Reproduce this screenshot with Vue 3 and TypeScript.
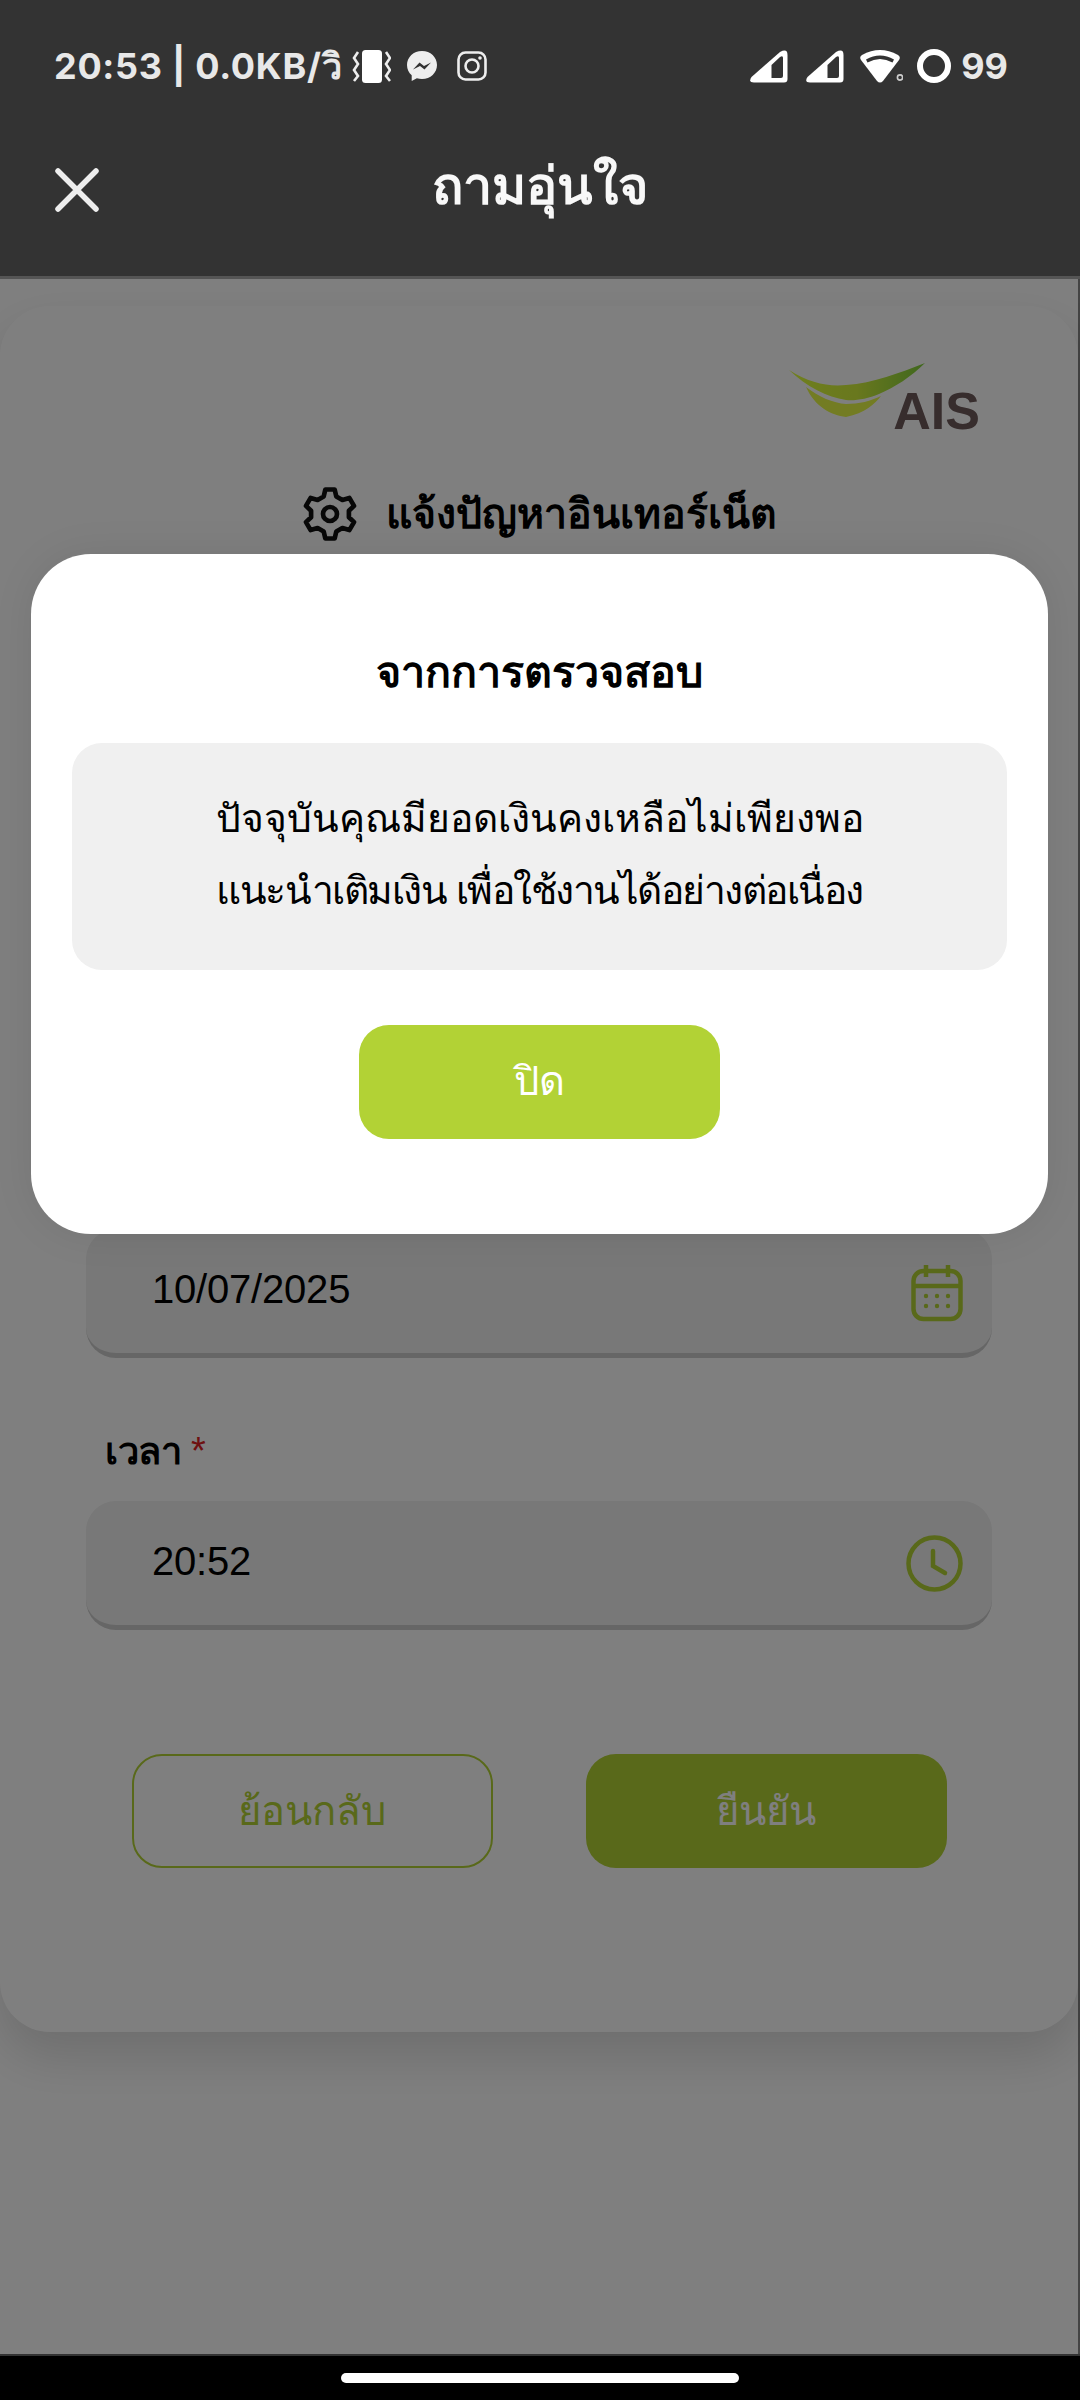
<script setup lang="ts">
const title = 'ถามอุ่นใจ'
const date = '10/07/2025'
const time = '20:52'
</script>

<template>
  <div class="screen">
    <header class="top">
      <div class="status">
        <span class="status-text clock-text">20:53 | 0.0KB/วิ</span>
        <svg class="ic-vib" viewBox="0 0 39 33">
          <rect x="10" y="0" width="20" height="33" rx="3.500" fill="#fff" />
          <path d="M6 2 L2 8 L6 14 L2 20 L6 26 L2 31" fill="none" stroke="#eee" stroke-width="2.600" />
          <path d="M34 2 L38 8 L34 14 L38 20 L34 26 L38 31" fill="none" stroke="#eee" stroke-width="2.600" />
        </svg>
        <svg class="ic-msg" viewBox="0 0 32 32">
          <path d="M16 1C7.500 1 1 7.200 1 15c0 4.300 1.800 7.800 4.700 10.300V31l5.200-2.700c1.600.5 3.300.7 5.100.7 8.500 0 15-6.200 15-14S24.500 1 16 1z" fill="#eee" />
          <path d="M7 19.500 L13.500 12.500 L18 16 L25 12.500 L18.500 19.500 L14 16 Z" fill="#333" />
        </svg>
        <svg class="ic-ig" viewBox="0 0 30 30">
          <rect x="1.500" y="1.500" width="27" height="27" rx="7" fill="none" stroke="#eee" stroke-width="2.600" />
          <circle cx="15" cy="15" r="6.500" fill="none" stroke="#eee" stroke-width="2.600" />
          <circle cx="23" cy="7" r="1.800" fill="#eee" />
        </svg>
        <span class="grow"></span>
        <svg class="ic-sig" viewBox="0 0 38 33">
          <path d="M1.500 27 L30 2 Q37.500 -2 37.500 5 V29 Q37.500 32.500 34 32.500 H4 Q-2 32.500 1.500 27Z" fill="#fff" />
          <path d="M21.500 15 L30 7 Q33 5 33 8 V26 Q33 28 31 28 H21.500Z" fill="#333" />
        </svg>
        <svg class="ic-sig sig2" viewBox="0 0 38 33">
          <path d="M1.500 27 L30 2 Q37.500 -2 37.500 5 V29 Q37.500 32.500 34 32.500 H4 Q-2 32.500 1.500 27Z" fill="#fff" />
          <path d="M21.500 15 L30 7 Q33 5 33 8 V26 Q33 28 31 28 H21.500Z" fill="#333" />
        </svg>
        <svg class="ic-wifi" viewBox="0 0 43 34">
          <path d="M1 11 Q-1 8 2 6 Q20 -4 38 6 Q41 8 39 11 L23 32 Q20 35 17 32Z" fill="#fff" />
          <path d="M6 10.500 Q20 2.500 34 10.500 L32.500 13.500 Q20 6.500 7.500 13.500Z" fill="#333" />
          <circle cx="40" cy="28.500" r="2.600" fill="none" stroke="#ccc" stroke-width="1.600" />
        </svg>
        <svg class="ic-batt" viewBox="0 0 34 34">
          <circle cx="17" cy="17" r="14" fill="none" stroke="#fff" stroke-width="6" />
        </svg>
        <span class="status-text batt">99</span>
      </div>
      <div class="bar">
        <svg class="close" viewBox="0 0 44 44">
          <path d="M3 3 L41 41 M41 3 L3 41" stroke="#eee" stroke-width="5.500" stroke-linecap="round" />
        </svg>
        <h1 class="bar-title">{{ title }}</h1>
      </div>
    </header>

    <main class="main">
      <section class="card">
        <div class="logo">
          <svg class="swoosh" viewBox="0 0 136 54">
            <defs>
              <linearGradient id="sw" x1="0" y1="0" x2="1" y2="0">
                <stop offset="0" stop-color="#e0ff3c" />
                <stop offset="0.5" stop-color="#d2f03c" />
                <stop offset="1" stop-color="#80d03c" />
              </linearGradient>
            </defs>
            <path d="M0 7 C20 20 40 24 57 22 C85 20 110 10 136 0 C122 14 106 24 90 31 C78 36 66 38 57 37 C38 34 18 24 0 7Z" fill="url(#sw)" />
            <path d="M17 24 C30 34 44 40 57 41 C70 41 82 38 92 33 C86 41 76 50 57 54 C42 52 26 44 17 24Z" fill="#e6f846" />
          </svg>
          <span class="ais">AIS</span>
        </div>

        <div class="form-title">
          <svg class="gear" viewBox="0 0 24 24" fill="none" stroke="#111" stroke-width="2" stroke-linejoin="round">
            <path d="M10 1.500h4l.7 3 2.600 1.500 3-.9 2 3.400-2.200 2.100v2.800l2.200 2.100-2 3.400-3-.9-2.600 1.500-.7 3h-4l-.7-3-2.600-1.500-3 .9-2-3.400 2.200-2.100v-2.800L1.700 8.500l2-3.400 3 .9L9.300 4.500z" />
            <circle cx="12" cy="12" r="3" />
          </svg>
          <span>แจ้งปัญหาอินเทอร์เน็ต</span>
        </div>

        <div class="field date-field">
          <span class="value">{{ date }}</span>
          <svg class="fi cal" viewBox="0 0 52 57" fill="none" stroke="#b2d235" stroke-width="4.500">
            <rect x="2.500" y="6" width="47" height="48" rx="10" />
            <path d="M2.500 21 H49.500 M15 0 V12 M37 0 V12" />
            <g fill="#b2d235" stroke="none">
              <circle cx="15" cy="31" r="2.200" /><circle cx="26" cy="31" r="2.200" /><circle cx="37" cy="31" r="2.200" />
              <circle cx="15" cy="41" r="2.200" /><circle cx="26" cy="41" r="2.200" /><circle cx="37" cy="41" r="2.200" />
            </g>
          </svg>
        </div>

        <label class="label">เวลา <em>*</em></label>
        <div class="field">
          <span class="value">{{ time }}</span>
          <svg class="fi clock" viewBox="0 0 57 57" fill="none" stroke="#b2d235" stroke-width="4.500" stroke-linecap="round">
            <circle cx="28.500" cy="28.500" r="26" />
            <path d="M27 16 V31 L39 38" />
          </svg>
        </div>

        <div class="actions">
          <button class="btn ghost">ย้อนกลับ</button>
          <button class="btn solid">ยืนยัน</button>
        </div>
      </section>

      <div class="scrim">
        <div class="modal">
          <h2 class="modal-title">จากการตรวจสอบ</h2>
          <div class="modal-box">
            <p class="line-a">ปัจจุบันคุณมียอดเงินคงเหลือไม่เพียงพอ</p>
            <p class="line-b">แนะนำเติมเงิน เพื่อใช้งานได้อย่างต่อเนื่อง</p>
          </div>
          <button class="btn close-btn">ปิด</button>
        </div>
      </div>
    </main>

    <footer class="nav"><span class="pill"></span></footer>
  </div>
</template>

<style>
html, body { margin: 0; background: #000; }
</style>

<style scoped>
.screen {
  width: 1080px;
  height: 2400px;
  display: flex;
  flex-direction: column;
  overflow: hidden;
  font-family: "Liberation Sans", "Noto Sans", sans-serif;
}

.top {
  height: 276px;
  flex: none;
  background: #333;
  border-bottom: 3px solid #555;
}
.status {
  display: flex;
  align-items: center;
  height: 34px;
  padding: 49px 72px 0 54px;
}
.status-text {
  font: 700 36px Inter, "Noto Sans", sans-serif;
  color: #e8e8e8;
  white-space: nowrap;
}
.clock-text { letter-spacing: 0.7px; }
.grow { flex: 1; }
.ic-vib { width: 39px; height: 33px; margin-left: 10px; }
.ic-msg { width: 32px; height: 32px; margin-left: 15px; }
.ic-ig { width: 30px; height: 30px; margin-left: 19px; }
.ic-sig { width: 38px; height: 33px; }
.sig2 { margin-left: 18px; }
.ic-wifi { width: 43px; height: 34px; margin-left: 16px; }
.ic-batt { width: 34px; height: 34px; margin-left: 14px; }
.batt { margin-left: 10px; }

.bar {
  position: relative;
  display: flex;
  align-items: center;
  justify-content: center;
  height: 90px;
  margin-top: 57px;
}
.close { position: absolute; left: 55px; top: 28px; width: 44px; height: 44px; }
.bar-title {
  margin: 0;
  font-size: 52px;
  font-weight: 700;
  color: #f8f8f8;
}

.main {
  position: relative;
  flex: 1;
  background: #fff;
  padding-top: 27px;
  border-right: 2px solid #444;
}
.card {
  height: 1726px;
  box-sizing: border-box;
  background: #fff;
  border-radius: 50px;
  box-shadow: 0 24px 50px rgba(0, 0, 0, 0.14);
  padding: 57px 0 0;
}
.logo {
  display: flex;
  justify-content: flex-end;
  align-items: flex-end;
  padding: 0 98px 0 0;
  position: relative;
  height: 70px;
}
.swoosh { position: absolute; left: 789px; top: 0; width: 136px; height: 54px; }
.ais {
  font: 700 52px "Liberation Sans", sans-serif;
  color: #6e5a5a;
  line-height: 44px;
}
.form-title {
  display: flex;
  align-items: center;
  justify-content: center;
  gap: 28px;
  margin-top: 48px;
  font-size: 41px;
  font-weight: 700;
  color: #000;
}
.gear { width: 56px; height: 56px; }

.field {
  margin: 0 86px 0 86px;
  height: 124px;
  border-bottom: 5px solid #ccc;
  border-radius: 30px;
  background: #f0f0f0;
  display: flex;
  align-items: center;
  justify-content: space-between;
  padding: 0 29px 0 66px;
  box-sizing: content-box;
}
.date-field { margin-top: 683px; }
.value { font-size: 40px; letter-spacing: -0.2px; color: #000; padding-bottom: 3px; }
.fi { width: 52px; height: 57px; }
.cal { margin-top: 4px; }
.clock { width: 57px; height: 57px; }
.label {
  display: block;
  margin: 62px 0 20px 105px;
  font-size: 38px;
  letter-spacing: -0.5px;
  font-weight: 700;
  color: #000;
}
.label em { font-style: normal; font-weight: 400; color: #d22; }

.actions {
  display: flex;
  justify-content: center;
  gap: 93px;
  margin-top: 124px;
}
.btn {
  width: 361px;
  height: 114px;
  border-radius: 30px;
  font-family: inherit;
  font-size: 40px;
  box-sizing: border-box;
}
.ghost { background: #fff; border: 2px solid #b2d235; color: #b2d235; }
.solid { background: #b2d235; border: 0; color: #fff; }

.scrim {
  position: absolute;
  inset: 0;
  background: rgba(0, 0, 0, 0.5);
  padding: 275px 30px 0 31px;
}
.modal {
  height: 680px;
  box-sizing: border-box;
  background: #fff;
  border-radius: 60px;
  box-shadow: 0 0 40px rgba(0, 0, 0, 0.08);
  padding: 84px 41px 0;
  display: flex;
  flex-direction: column;
  align-items: center;
}
.modal-title {
  margin: 0;
  height: 105px;
  font-size: 43px;
  font-weight: 700;
  color: #000;
}
.modal-box {
  width: 100%;
  height: 227px;
  box-sizing: border-box;
  padding-bottom: 6px;
  background: #f0f0f0;
  border-radius: 30px;
  display: flex;
  flex-direction: column;
  justify-content: center;
  align-items: center;
  gap: 10px;
}
.modal-box p { margin: 0; font-size: 39px; color: #000; }
.modal-box .line-b { letter-spacing: -1.500px; }
.close-btn {
  margin-top: 55px;
  padding-bottom: 4px;
  background: #b2d235;
  border: 0;
  color: #fff;
}

.nav {
  height: 46px;
  flex: none;
  background: #000;
  border-top: 2px solid #333;
  display: flex;
  justify-content: center;
  padding-top: 17px;
  box-sizing: border-box;
}
.pill { width: 398px; height: 10px; border-radius: 5px; background: #fff; }
</style>
